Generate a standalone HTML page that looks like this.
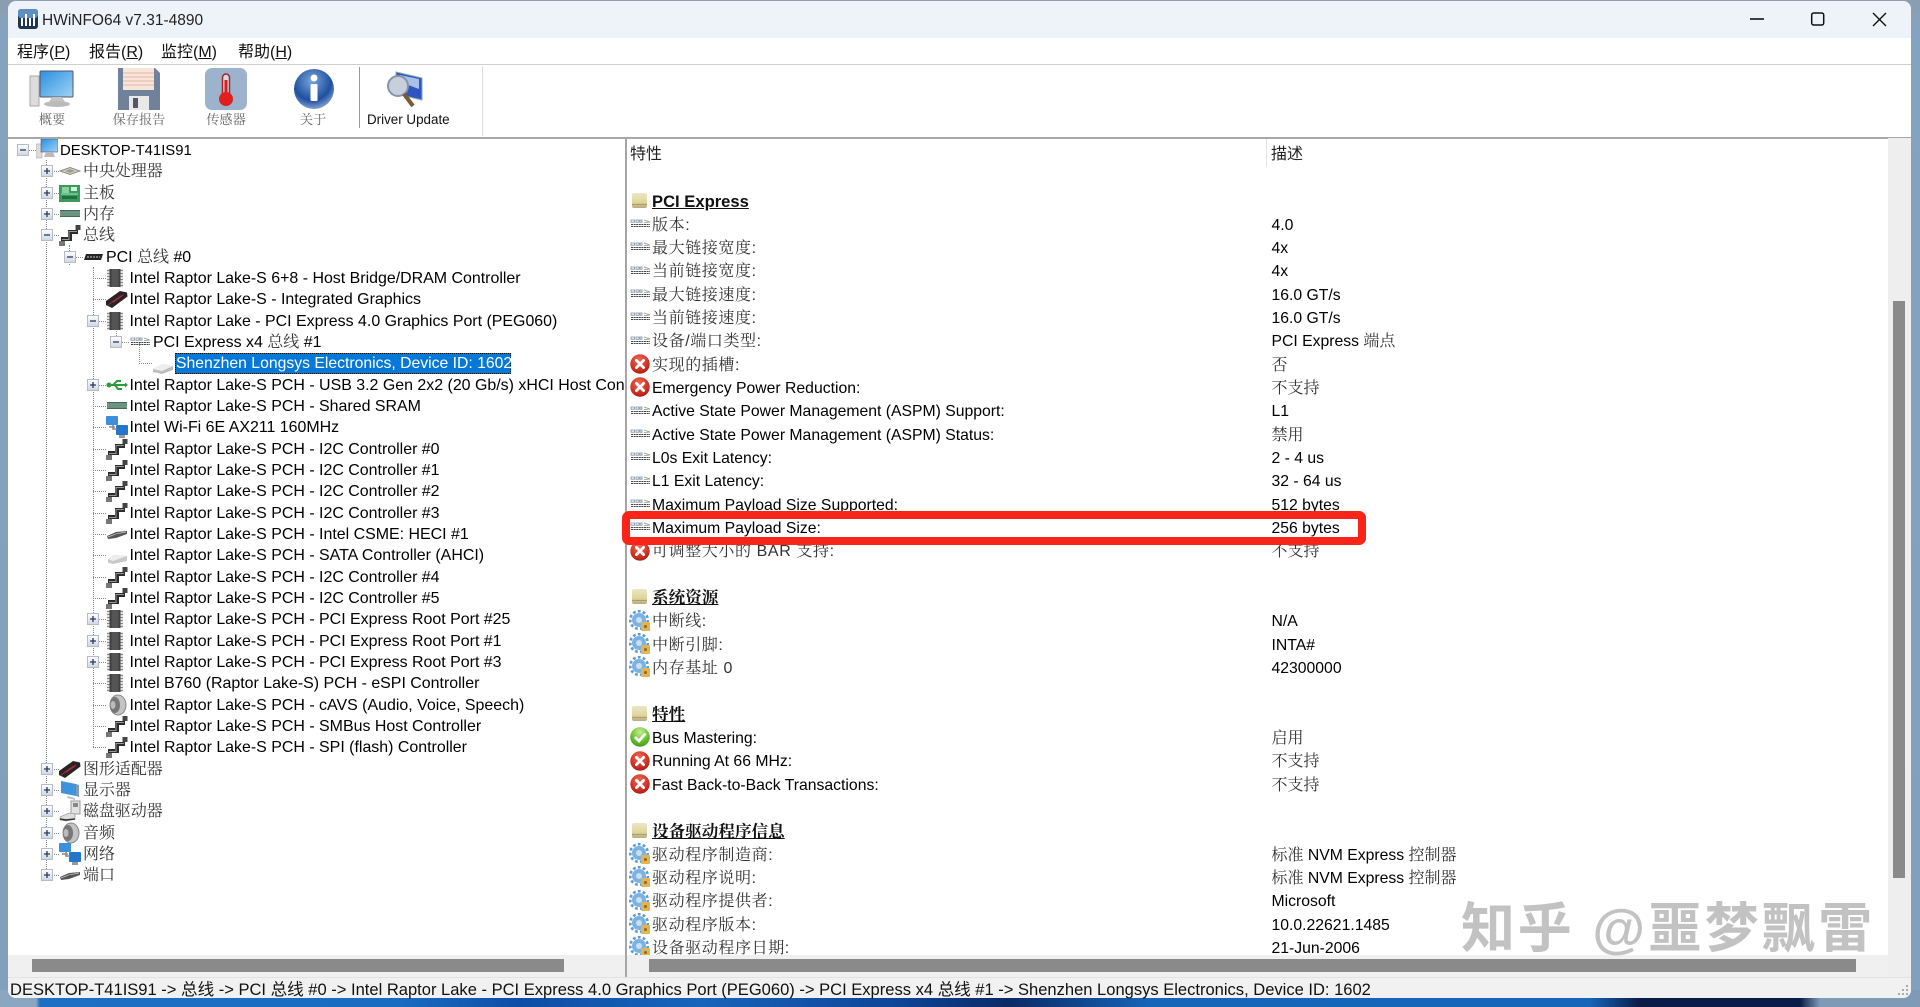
<!DOCTYPE html>
<html lang="zh"><head><meta charset="utf-8"><title>HWiNFO64 v7.31-4890</title>
<style>
html,body{margin:0;padding:0;width:1920px;height:1007px;overflow:hidden}
body{position:relative;background:linear-gradient(90deg,#8aa6c1 0,#8aa6c1 36px,#1c6fc2 40px,#1a6cc0 400px,#0e4da6 520px,#1764ba 700px,#0d4496 900px,#0b2a66 1010px,#1565b8 1150px,#1565b8 1590px,#0a1b48 1640px,#0a1b48 1800px,#7e9ab6 1820px,#7e9ab6 1920px);font-family:"Liberation Sans","Noto Serif CJK SC",serif;font-size:15.75px;color:#000}
#strip{position:absolute;left:0;top:0;width:1920px;height:990px;background:linear-gradient(180deg,#8c9db0 0,#84a3c1 30px,#82a0bd 100%)}
#win{position:absolute;left:8px;top:1px;width:1903px;height:997px;background:#fff;border-radius:8px;overflow:hidden}
.abs{position:absolute}
#title{left:0;top:0;width:1903px;height:37px;background:#eef3fa}
#menuline{left:0;top:63px;width:1903px;height:1px;background:#cfcfcf}
#toolline{left:0;top:136px;width:1903px;height:2px;background:#a8a8a8}
.ab{position:absolute;white-space:nowrap}
.menu{font-family:"Liberation Sans","Noto Sans CJK SC",sans-serif;font-size:16px;top:42px;line-height:22px;color:#111}
.menu u{text-decoration-thickness:1px}
.lab{top:110px;line-height:20px;font-size:13.2px;color:#666;transform:translateX(-50%)}
.r{position:absolute;left:0;width:624px;height:22px;white-space:nowrap}
.r::before{content:"";position:absolute;top:11px;height:0;border-top:1px dotted #888}
.r .t{position:absolute;top:1px;line-height:22px;font-size:15.95px}
.r svg{position:absolute;width:22px;height:22px}
.r svg.i{top:0}
.r svg.b{top:5px;width:12px;height:12px}
.c{color:#333;font-size:16px}
.l0 .b{left:17px}.l0 .i{left:36px}.l0 .t{left:60px;font-size:14.85px}.l0::before{left:23px;width:13px}
.l1 .b{left:41px}.l1 .i{left:59px}.l1 .t{left:83px}.l1::before{left:46px;width:13px}
.l2 .b{left:64px}.l2 .i{left:83px}.l2 .t{left:106px}.l2::before{left:69px;width:14px}
.l3 .b{left:87px}.l3 .i{left:106px}.l3 .t{left:129.500px}.l3::before{left:93px;width:13px}
.l4 .b{left:110px}.l4 .i{left:129px}.l4 .t{left:153px}.l4::before{left:116px;width:13px}
.l5 .i{left:152px}.l5 .t{left:176px;color:#fff;font-size:15.75px}.l5::before{left:139px;width:13px}
#sel{left:175px;top:353px;width:336px;height:21px;background:#0678d8;outline:1px dotted #111;outline-offset:-1px}
.v{position:absolute;width:0;border-left:1px dotted #888}
#sep{left:625px;top:138px;width:2px;height:839px;background:#a6a6a6}
#hl{left:1266px;top:139px;width:1px;height:28px;background:#e2e2e2}
.q{position:absolute;left:0;width:1888px;height:23px;white-space:nowrap}
.q svg{position:absolute;left:629px;top:0;width:22px;height:22px}
.q .k{position:absolute;left:652px;top:.7px;line-height:23px}
.q .k.c{letter-spacing:.6px}
.q .w{position:absolute;left:1271.500px;top:.7px;line-height:23px}
.q .h{position:absolute;left:652px;top:0;line-height:23px;text-decoration:underline;font-weight:700;color:#111;font-size:16.6px}
.s{font-family:"Liberation Sans","Noto Sans CJK SC",sans-serif}
#status{left:0;top:977px;width:1911px;height:21px;background:#f1f1f1;border-top:1px solid #e2e2e2;border-radius:0 0 8px 8px;box-sizing:border-box}
#hb{left:8px;top:955px;width:1903px;height:22px;background:#f0f0f0}
#vb{left:1888px;top:138px;width:23px;height:839px;background:#eeeeee}
#stext{left:10px;top:979px;line-height:21px;font-family:"Liberation Sans","Noto Sans CJK SC",sans-serif;font-size:16.55px;color:#111}
#wm{left:1461px;top:894px;font-family:"Liberation Sans","Noto Sans CJK SC",sans-serif;font-weight:700;font-size:54px;line-height:70px;color:#c2c2c2;letter-spacing:2.800px}
#red{left:622px;top:511px;width:744px;height:34px;border:8px solid #fb2418;border-radius:7px;box-sizing:border-box}
</style></head><body>
<svg width="0" height="0" style="position:absolute">
<defs>
<linearGradient id="gb" x1="0" y1="0" x2="0" y2="1"><stop offset="0" stop-color="#fff"/><stop offset="1" stop-color="#cfd6e2"/></linearGradient>
<radialGradient id="gr" cx=".45" cy=".3" r=".8"><stop offset="0" stop-color="#ee6a55"/><stop offset=".7" stop-color="#c92a1c"/><stop offset="1" stop-color="#8c1610"/></radialGradient>
<radialGradient id="gg" cx=".5" cy=".25" r=".85"><stop offset="0" stop-color="#c4ee90"/><stop offset=".6" stop-color="#62bb2c"/><stop offset="1" stop-color="#3b8f18"/></radialGradient>
<linearGradient id="gf" x1="0" y1="0" x2="0" y2="1"><stop offset="0" stop-color="#ece6c8"/><stop offset=".6" stop-color="#e2d59a"/><stop offset="1" stop-color="#b5ab80"/></linearGradient>
<linearGradient id="gs" x1="0" y1="0" x2="1" y2="1"><stop offset="0" stop-color="#2b8fe0"/><stop offset="1" stop-color="#9fd4f6"/></linearGradient>
<radialGradient id="gi" cx=".45" cy=".3" r=".8"><stop offset="0" stop-color="#7aa5dc"/><stop offset=".6" stop-color="#1f4f9f"/><stop offset="1" stop-color="#a8c4e6"/></radialGradient>
<symbol id="p" viewBox="0 0 12 12"><rect x=".5" y=".5" width="11" height="11" fill="url(#gb)" stroke="#b4bcc8"/><path d="M3 6h6M6 3v6" stroke="#2a3a5c" stroke-width="1.3"/></symbol>
<symbol id="m" viewBox="0 0 12 12"><rect x=".5" y=".5" width="11" height="11" fill="url(#gb)" stroke="#b4bcc8"/><path d="M3 6h6" stroke="#2a3a5c" stroke-width="1.3"/></symbol>
<symbol id="err" viewBox="0 0 22 22"><circle cx="11" cy="11" r="9.7" fill="url(#gr)"/><path d="M7.4 7.4l7.2 7.2M14.6 7.4l-7.2 7.2" stroke="#fff" stroke-width="2.8" stroke-linecap="round"/></symbol>
<symbol id="ok" viewBox="0 0 22 22"><circle cx="11" cy="11" r="9.8" fill="url(#gg)"/><path d="M6 11l4 4 6.5-7.5" fill="none" stroke="#fff" stroke-width="2.8"/></symbol>
<symbol id="pcie" viewBox="0 0 22 22"><path d="M2 7h3.5v2.2H2zM7 7h3v2.2H7zM11 7h2v2.2h-2z" fill="none" stroke="#7c8ca0" stroke-width=".8"/><path d="M15 7l6 2-6 .6" fill="none" stroke="#8a9a8a" stroke-width=".8"/><path d="M2 11.5h19M2 13.5h19" stroke="#444" stroke-width="1.1" stroke-dasharray="2 .6"/></symbol>
<symbol id="fold" viewBox="0 0 22 22"><rect x="3" y="3" width="15" height="15" rx="2" fill="url(#gf)"/><path d="M3 14.5h15" stroke="#a89e70" stroke-width="1"/></symbol>
<symbol id="gear" viewBox="0 0 22 22"><circle cx="10" cy="10" r="7" fill="#7cb2e2"/><circle cx="10" cy="10" r="8.8" fill="none" stroke="#5f9bd3" stroke-width="2.6" stroke-dasharray="2.8 2.2"/><circle cx="10" cy="10" r="3" fill="#c8dff2"/><rect x="12" y="12" width="9" height="9" rx="1" fill="#e3b552"/><circle cx="16.5" cy="16.5" r="1.5" fill="#8a6a20"/></symbol>
<symbol id="chip" viewBox="0 0 22 22"><path d="M1 3.500h16M1 6.500h16M1 9.500h16M1 12.500h16M1 15.500h16M1 18.500h16" stroke="#8a8a8a" stroke-width="1.4"/><rect x="3.500" y="2" width="11" height="18" fill="#404040"/><rect x="5.500" y="2" width="7" height="18" fill="#555"/></symbol>
<symbol id="gpu" viewBox="0 0 22 22"><path d="M0 13L14 3l7 1.500 .5 4L6 20 0 17z" fill="#2a2225"/><path d="M5 14l9-6.500 3 .8-9 6.500z" fill="#7c2030"/><path d="M2 17l15-10" stroke="#a44" stroke-width=".7"/></symbol>
<symbol id="bus" viewBox="0 0 22 22"><path d="M4 20v-5h7V8h8" fill="none" stroke="#2c2c2c" stroke-width="4"/><path d="M3 15.500h7V7.500h8" fill="none" stroke="#999" stroke-width="1"/><rect x="16.500" y="1" width="5" height="5" fill="#444"/><rect x="0" y="17" width="6" height="5" fill="#777"/></symbol>
<symbol id="ram" viewBox="0 0 22 22"><rect x="1" y="7" width="20" height="7" fill="#3e6d55"/><path d="M2 8v5M4 8v5M6 8v5M8 8v5M10 8v5M12 8v5M14 8v5M16 8v5M18 8v5M20 8v5" stroke="#9cb8a8" stroke-width="1"/></symbol>
<symbol id="mb" viewBox="0 0 22 22"><rect x="0" y="3" width="21" height="17" fill="#3c9a5c"/><rect x="3" y="5" width="7" height="6" fill="#88d0a0"/><rect x="12" y="5" width="6" height="4" fill="#cfeedd"/><rect x="3" y="14" width="15" height="3" fill="#20703f"/><path d="M2 12h17" stroke="#bfe" stroke-width=".8"/></symbol>
<symbol id="usb" viewBox="0 0 22 22"><path d="M3 11h16M7 11l4-4h4M9 11l3 4h4" fill="none" stroke="#2e9a3f" stroke-width="2"/><circle cx="3" cy="11" r="2.500" fill="#2e9a3f"/><path d="M19 8.500l3 2.500-3 2.500z" fill="#2e9a3f"/></symbol>
<symbol id="net" viewBox="0 0 22 22"><rect x="0" y="0" width="12" height="9" rx="1" fill="#3e8ede"/><rect x="10" y="9" width="12" height="10" rx="1" fill="#2277cc"/><path d="M7 9v4h4M3 11h6" stroke="#8a8a8a" stroke-width="1.600" fill="none"/><rect x="13" y="19" width="6" height="3" fill="#999"/></symbol>
<symbol id="ssd" viewBox="0 0 22 22"><path d="M2 15l6-4 13 1v5l-14 3-5-1.5z" fill="#c9c9c9"/><path d="M2 15l5 2 14-5-13-1z" fill="#ececec"/></symbol>
<symbol id="port" viewBox="0 0 22 22"><path d="M1 13l9-4 11-1v3L10 15 2 16z" fill="#555"/><path d="M2 14l8-3 10-2" stroke="#ccc" stroke-width=".8"/></symbol>
<symbol id="cpu" viewBox="0 0 22 22"><path d="M1 11l10-3.5L21 11l-10 3.5z" fill="#d0d0c8" stroke="#8a8a80"/><path d="M6 11l5-1.7 5 1.7-5 1.7z" fill="#9a9a8e"/></symbol>
<symbol id="mon" viewBox="0 0 22 22"><path d="M2 2l15 3v12L2 14z" fill="#3e94dc"/><path d="M17 5l3 1v12l-3-1z" fill="#7c9cbc"/><path d="M9 17l7 2v2l-8-2z" fill="#b8c4d0"/></symbol>
<symbol id="disk" viewBox="0 0 22 22"><rect x="12" y="1" width="9" height="13" fill="#e2e2e2" stroke="#999"/><rect x="14" y="3" width="5" height="4" fill="#888"/><path d="M1 17l9-4 6 1v5l-9 2-6-1z" fill="#ddd" stroke="#888" stroke-width=".6"/><path d="M1 19l6 1 9-1" stroke="#333" stroke-width="1.6" fill="none"/></symbol>
<symbol id="spk" viewBox="0 0 22 22"><ellipse cx="12" cy="11" rx="8" ry="10" fill="#c4c4c4" stroke="#888"/><ellipse cx="9" cy="11" rx="5" ry="8" fill="#777"/><ellipse cx="7" cy="11" rx="2.500" ry="4" fill="#bbb"/></symbol>
<symbol id="pc" viewBox="0 0 22 22"><rect x="0" y="5" width="6" height="14" fill="#dcdcdc" stroke="#aaa" stroke-width=".6"/><rect x="5" y="0" width="17" height="13" fill="url(#gs)" stroke="#557" stroke-width=".6"/><path d="M10 13h7l2 5H8z" fill="#bbb"/></symbol>
<symbol id="nvme" viewBox="0 0 22 22"><path d="M1 17l10-5 10 2v4l-11 4-9-2z" fill="#bdbdbd"/><path d="M1 17l9 2 11-5-10-2z" fill="#eee"/></symbol>
<symbol id="busb" viewBox="0 0 22 22"><path d="M3 8h17l-2 6H1z" fill="#262626"/><path d="M4 11h13" stroke="#ccc" stroke-width="1" stroke-dasharray="2 1"/></symbol>
</defs></svg>

<div id="strip"></div>
<div id="win">
<div id="title" class="abs"></div>
<div id="menuline" class="abs"></div>
<div id="toolline" class="abs"></div>
</div>

<div id="hb" class="abs"></div>
<div id="vb" class="abs"></div>
<div class="abs" style="left:1893px;top:301px;width:12px;height:577px;background:#8a8a8a"></div>
<div class="abs" style="left:32px;top:959px;width:532px;height:13px;background:#8a8a8a"></div>
<div class="abs" style="left:649px;top:959px;width:1207px;height:13px;background:#8a8a8a"></div>
<div id="status" class="abs" style="left:8px;width:1903px"></div>
<div id="sep" class="abs"></div>
<div id="hl" class="abs"></div>

<svg class="abs" style="left:18px;top:9px" width="20" height="20" viewBox="0 0 20 20"><rect x="0" y="0" width="20" height="20" rx="3" fill="#1f3550"/><rect x="0" y="0" width="20" height="9" rx="3" fill="#5d8fc0"/><path d="M4 17V9M8 17V5M12 17V9M16 17V5" stroke="#fff" stroke-width="2"/></svg>
<div class="ab" style="left:42px;top:10px;line-height:22px;font-size:15.5px;color:#222;font-family:'Liberation Sans',sans-serif">HWiNFO64 v7.31-4890</div>
<svg class="abs" style="left:1745px;top:8px" width="160" height="24" viewBox="0 0 160 24"><path d="M5 11h14" stroke="#111" stroke-width="1.6"/><rect x="66.7" y="5" width="12" height="12" rx="2" fill="none" stroke="#111" stroke-width="1.5"/><path d="M128 5l13 13M141 5l-13 13" stroke="#111" stroke-width="1.4"/></svg>

<div class="ab menu" style="left:17px">程序(<u>P</u>)</div>
<div class="ab menu" style="left:89px">报告(<u>R</u>)</div>
<div class="ab menu" style="left:161px">监控(<u>M</u>)</div>
<div class="ab menu" style="left:238px">帮助(<u>H</u>)</div>

<svg class="abs" style="left:28px;top:68px" width="48" height="42" viewBox="0 0 48 42"><rect x="2" y="8" width="9" height="30" fill="#dcdcdc" stroke="#aaa"/><rect x="12" y="3" width="33" height="26" rx="1" fill="url(#gs)" stroke="#556"/><path d="M24 29h10l3 5H21z" fill="#c4c4c4"/><ellipse cx="29" cy="36" rx="13" ry="3" fill="#bbb"/></svg>
<svg class="abs" style="left:118px;top:68px" width="42" height="42" viewBox="0 0 42 42"><path d="M0 0h37l5 5v37H0z" fill="#6f8299"/><rect x="5" y="0" width="31" height="22" fill="#f8e4d8"/><path d="M5 5h31M5 9h31M5 13h31M5 17h31" stroke="#e4b8a8"/><rect x="11" y="28" width="20" height="14" fill="#e8e8e8"/><rect x="15" y="30" width="5" height="10" fill="#556"/></svg>
<svg class="abs" style="left:205px;top:68px" width="42" height="42" viewBox="0 0 42 42"><rect width="42" height="42" rx="7" fill="#9db2cc"/><rect x="17.500" y="6" width="7" height="24" rx="3.500" fill="#d8d8e0" stroke="#a02828" stroke-width="1.500"/><rect x="19.500" y="12" width="3" height="20" fill="#d61c1c"/><circle cx="21" cy="31" r="7" fill="#e0201c"/></svg>
<svg class="abs" style="left:293px;top:68px" width="42" height="42" viewBox="0 0 42 42"><circle cx="21" cy="21" r="20" fill="url(#gi)"/><circle cx="21" cy="10" r="3.500" fill="#fff"/><rect x="17.500" y="16" width="7" height="17" rx="1" fill="#fff"/></svg>
<svg class="abs" style="left:386px;top:70px" width="38" height="40" viewBox="0 0 38 40"><path d="M10 2l26 6v22L10 24z" fill="#2f55c0" stroke="#8aa"/><path d="M14 5l19 4v10L14 12z" fill="#a8bfe8"/><circle cx="12" cy="16" r="10" fill="#c6cfdc" stroke="#8894a8" stroke-width="2"/><path d="M18 24l9 12" stroke="#7a5a30" stroke-width="4"/></svg>
<div class="ab lab" style="left:52px">概要</div>
<div class="ab lab" style="left:139px">保存报告</div>
<div class="ab lab" style="left:226px">传感器</div>
<div class="ab lab" style="left:313px">关于</div>
<div class="ab" style="left:367px;top:110px;line-height:20px;font-size:13.4px;font-family:'Liberation Sans',sans-serif;color:#111">Driver Update</div>
<div class="abs" style="left:359px;top:67px;width:1px;height:61px;background:#999"></div>
<div class="abs" style="left:482px;top:66px;width:1px;height:70px;background:#ddd"></div>

<div class="v" style="left:46px;top:160px;height:713px"></div>
<div class="v" style="left:69px;top:245px;height:20px"></div>
<div class="v" style="left:93px;top:267px;height:480px"></div>
<div class="v" style="left:116px;top:320px;height:22px"></div>
<div class="v" style="left:139px;top:342px;height:22px"></div>
<div id="sel" class="abs"></div>

<div class="abs" style="left:0;top:0;width:624px;height:955px;overflow:hidden">
<div class="r l0" style="top:139px"><svg class="b"><use href="#m"/></svg><svg class="i"><use href="#pc"/></svg><span class="t">DESKTOP-T41IS91</span></div>
<div class="r l1" style="top:160.300px"><svg class="b"><use href="#p"/></svg><svg class="i"><use href="#cpu"/></svg><span class="t c">中央处理器</span></div>
<div class="r l1" style="top:181.700px"><svg class="b"><use href="#p"/></svg><svg class="i"><use href="#mb"/></svg><span class="t c">主板</span></div>
<div class="r l1" style="top:203px"><svg class="b"><use href="#p"/></svg><svg class="i"><use href="#ram"/></svg><span class="t c">内存</span></div>
<div class="r l1" style="top:224.300px"><svg class="b"><use href="#m"/></svg><svg class="i"><use href="#bus"/></svg><span class="t c">总线</span></div>
<div class="r l2" style="top:245.700px"><svg class="b"><use href="#m"/></svg><svg class="i"><use href="#busb"/></svg><span class="t">PCI <span class="c">总线</span> #0</span></div>
<div class="r l3" style="top:267px"><svg class="i"><use href="#chip"/></svg><span class="t">Intel Raptor Lake-S 6+8 - Host Bridge/DRAM Controller</span></div>
<div class="r l3" style="top:288.300px"><svg class="i"><use href="#gpu"/></svg><span class="t">Intel Raptor Lake-S - Integrated Graphics</span></div>
<div class="r l3" style="top:309.700px"><svg class="b"><use href="#m"/></svg><svg class="i"><use href="#chip"/></svg><span class="t">Intel Raptor Lake - PCI Express 4.0 Graphics Port (PEG060)</span></div>
<div class="r l4" style="top:331px"><svg class="b"><use href="#m"/></svg><svg class="i"><use href="#pcie"/></svg><span class="t">PCI Express x4 <span class="c">总线</span> #1</span></div>
<div class="r l5" style="top:352.300px"><svg class="i"><use href="#nvme"/></svg><span class="t">Shenzhen Longsys Electronics, Device ID: 1602</span></div>
<div class="r l3" style="top:373.700px"><svg class="b"><use href="#p"/></svg><svg class="i"><use href="#usb"/></svg><span class="t">Intel Raptor Lake-S PCH - USB 3.2 Gen 2x2 (20 Gb/s) xHCI Host Controller</span></div>
<div class="r l3" style="top:395px"><svg class="i"><use href="#ram"/></svg><span class="t">Intel Raptor Lake-S PCH - Shared SRAM</span></div>
<div class="r l3" style="top:416.300px"><svg class="i"><use href="#net"/></svg><span class="t">Intel Wi-Fi 6E AX211 160MHz</span></div>
<div class="r l3" style="top:437.700px"><svg class="i"><use href="#bus"/></svg><span class="t">Intel Raptor Lake-S PCH - I2C Controller #0</span></div>
<div class="r l3" style="top:459px"><svg class="i"><use href="#bus"/></svg><span class="t">Intel Raptor Lake-S PCH - I2C Controller #1</span></div>
<div class="r l3" style="top:480.300px"><svg class="i"><use href="#bus"/></svg><span class="t">Intel Raptor Lake-S PCH - I2C Controller #2</span></div>
<div class="r l3" style="top:501.700px"><svg class="i"><use href="#bus"/></svg><span class="t">Intel Raptor Lake-S PCH - I2C Controller #3</span></div>
<div class="r l3" style="top:523px"><svg class="i"><use href="#port"/></svg><span class="t">Intel Raptor Lake-S PCH - Intel CSME: HECI #1</span></div>
<div class="r l3" style="top:544.300px"><svg class="i"><use href="#ssd"/></svg><span class="t">Intel Raptor Lake-S PCH - SATA Controller (AHCI)</span></div>
<div class="r l3" style="top:565.700px"><svg class="i"><use href="#bus"/></svg><span class="t">Intel Raptor Lake-S PCH - I2C Controller #4</span></div>
<div class="r l3" style="top:587px"><svg class="i"><use href="#bus"/></svg><span class="t">Intel Raptor Lake-S PCH - I2C Controller #5</span></div>
<div class="r l3" style="top:608.300px"><svg class="b"><use href="#p"/></svg><svg class="i"><use href="#chip"/></svg><span class="t">Intel Raptor Lake-S PCH - PCI Express Root Port #25</span></div>
<div class="r l3" style="top:629.700px"><svg class="b"><use href="#p"/></svg><svg class="i"><use href="#chip"/></svg><span class="t">Intel Raptor Lake-S PCH - PCI Express Root Port #1</span></div>
<div class="r l3" style="top:651px"><svg class="b"><use href="#p"/></svg><svg class="i"><use href="#chip"/></svg><span class="t">Intel Raptor Lake-S PCH - PCI Express Root Port #3</span></div>
<div class="r l3" style="top:672.300px"><svg class="i"><use href="#chip"/></svg><span class="t">Intel B760 (Raptor Lake-S) PCH - eSPI Controller</span></div>
<div class="r l3" style="top:693.700px"><svg class="i"><use href="#spk"/></svg><span class="t">Intel Raptor Lake-S PCH - cAVS (Audio, Voice, Speech)</span></div>
<div class="r l3" style="top:715px"><svg class="i"><use href="#bus"/></svg><span class="t">Intel Raptor Lake-S PCH - SMBus Host Controller</span></div>
<div class="r l3" style="top:736.300px"><svg class="i"><use href="#bus"/></svg><span class="t">Intel Raptor Lake-S PCH - SPI (flash) Controller</span></div>
<div class="r l1" style="top:757.700px"><svg class="b"><use href="#p"/></svg><svg class="i"><use href="#gpu"/></svg><span class="t c">图形适配器</span></div>
<div class="r l1" style="top:779px"><svg class="b"><use href="#p"/></svg><svg class="i"><use href="#mon"/></svg><span class="t c">显示器</span></div>
<div class="r l1" style="top:800.300px"><svg class="b"><use href="#p"/></svg><svg class="i"><use href="#disk"/></svg><span class="t c">磁盘驱动器</span></div>
<div class="r l1" style="top:821.700px"><svg class="b"><use href="#p"/></svg><svg class="i"><use href="#spk"/></svg><span class="t c">音频</span></div>
<div class="r l1" style="top:843px"><svg class="b"><use href="#p"/></svg><svg class="i"><use href="#net"/></svg><span class="t c">网络</span></div>
<div class="r l1" style="top:864.300px"><svg class="b"><use href="#p"/></svg><svg class="i"><use href="#port"/></svg><span class="t c">端口</span></div>
</div>

<div class="ab s" style="left:630px;top:143px;line-height:23px;font-size:16px;color:#222">特性</div>
<div class="ab s" style="left:1271px;top:143px;line-height:23px;font-size:16px;color:#222">描述</div>

<div class="q" style="top:189.700px"><svg><use href="#fold"/></svg><span class="h">PCI Express</span></div>
<div class="q" style="top:213px"><svg><use href="#pcie"/></svg><span class="k c">版本:</span><span class="w">4.0</span></div>
<div class="q" style="top:236.300px"><svg><use href="#pcie"/></svg><span class="k c">最大链接宽度:</span><span class="w">4x</span></div>
<div class="q" style="top:259.700px"><svg><use href="#pcie"/></svg><span class="k c">当前链接宽度:</span><span class="w">4x</span></div>
<div class="q" style="top:283px"><svg><use href="#pcie"/></svg><span class="k c">最大链接速度:</span><span class="w">16.0 GT/s</span></div>
<div class="q" style="top:306.300px"><svg><use href="#pcie"/></svg><span class="k c">当前链接速度:</span><span class="w">16.0 GT/s</span></div>
<div class="q" style="top:329.700px"><svg><use href="#pcie"/></svg><span class="k c">设备/端口类型:</span><span class="w">PCI Express <span class="c">端点</span></span></div>
<div class="q" style="top:353px"><svg><use href="#err"/></svg><span class="k c">实现的插槽:</span><span class="w c">否</span></div>
<div class="q" style="top:376.300px"><svg><use href="#err"/></svg><span class="k">Emergency Power Reduction:</span><span class="w c">不支持</span></div>
<div class="q" style="top:399.700px"><svg><use href="#pcie"/></svg><span class="k">Active State Power Management (ASPM) Support:</span><span class="w">L1</span></div>
<div class="q" style="top:423px"><svg><use href="#pcie"/></svg><span class="k">Active State Power Management (ASPM) Status:</span><span class="w c">禁用</span></div>
<div class="q" style="top:446.300px"><svg><use href="#pcie"/></svg><span class="k">L0s Exit Latency:</span><span class="w">2 - 4 us</span></div>
<div class="q" style="top:469.700px"><svg><use href="#pcie"/></svg><span class="k">L1 Exit Latency:</span><span class="w">32 - 64 us</span></div>
<div class="q" style="top:493px"><svg><use href="#pcie"/></svg><span class="k">Maximum Payload Size Supported:</span><span class="w">512 bytes</span></div>
<div class="q" style="top:516.300px"><svg><use href="#pcie"/></svg><span class="k">Maximum Payload Size:</span><span class="w">256 bytes</span></div>
<div class="q" style="top:539.700px"><svg><use href="#err"/></svg><span class="k c">可调整大小的 BAR 支持:</span><span class="w c">不支持</span></div>
<div class="q" style="top:586.300px"><svg><use href="#fold"/></svg><span class="h">系统资源</span></div>
<div class="q" style="top:609.700px"><svg><use href="#gear"/></svg><span class="k c">中断线:</span><span class="w">N/A</span></div>
<div class="q" style="top:633px"><svg><use href="#gear"/></svg><span class="k c">中断引脚:</span><span class="w">INTA#</span></div>
<div class="q" style="top:656.300px"><svg><use href="#gear"/></svg><span class="k c">内存基址 0</span><span class="w">42300000</span></div>
<div class="q" style="top:703px"><svg><use href="#fold"/></svg><span class="h">特性</span></div>
<div class="q" style="top:726.300px"><svg><use href="#ok"/></svg><span class="k">Bus Mastering:</span><span class="w c">启用</span></div>
<div class="q" style="top:749.700px"><svg><use href="#err"/></svg><span class="k">Running At 66 MHz:</span><span class="w c">不支持</span></div>
<div class="q" style="top:773px"><svg><use href="#err"/></svg><span class="k">Fast Back-to-Back Transactions:</span><span class="w c">不支持</span></div>
<div class="q" style="top:819.700px"><svg><use href="#fold"/></svg><span class="h">设备驱动程序信息</span></div>
<div class="q" style="top:843px"><svg><use href="#gear"/></svg><span class="k c">驱动程序制造商:</span><span class="w"><span class="c">标准</span> NVM Express <span class="c">控制器</span></span></div>
<div class="q" style="top:866.300px"><svg><use href="#gear"/></svg><span class="k c">驱动程序说明:</span><span class="w"><span class="c">标准</span> NVM Express <span class="c">控制器</span></span></div>
<div class="q" style="top:889.700px"><svg><use href="#gear"/></svg><span class="k c">驱动程序提供者:</span><span class="w">Microsoft</span></div>
<div class="q" style="top:913px"><svg><use href="#gear"/></svg><span class="k c">驱动程序版本:</span><span class="w">10.0.22621.1485</span></div>
<div class="q" style="top:936.300px;height:19px;overflow:hidden"><svg><use href="#gear"/></svg><span class="k c">设备驱动程序日期:</span><span class="w">21-Jun-2006</span></div>

<div id="red" class="abs"></div>
<div id="wm" class="ab">知乎 @噩梦飘雷</div>
<div id="stext" class="ab">DESKTOP-T41IS91 -&gt; 总线 -&gt; PCI 总线 #0 -&gt; Intel Raptor Lake - PCI Express 4.0 Graphics Port (PEG060) -&gt; PCI Express x4 总线 #1 -&gt; Shenzhen Longsys Electronics, Device ID: 1602</div>
<svg class="abs" style="left:1896px;top:983px" width="14" height="14" viewBox="0 0 14 14"><path d="M10 2h2v2h-2zM6 6h2v2H6zM10 6h2v2h-2zM2 10h2v2H2zM6 10h2v2H6zM10 10h2v2h-2z" fill="#aaa"/></svg>
</body></html>
